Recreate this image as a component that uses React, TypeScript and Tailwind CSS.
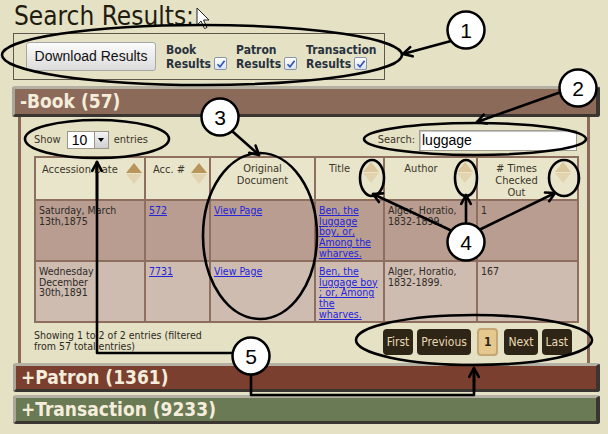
import React from 'react';

const cond = "font-['DejaVu_Sans_Condensed','DejaVu_Sans',sans-serif]";

function SortIcon({ active = false }: { active?: boolean }) {
  return (
    <span className="flex flex-col items-center gap-[1px] shrink-0">
      <span
        className={`w-0 h-0 border-x-[8px] border-x-transparent border-b-[10px] ${
          active ? 'border-b-[#b8955a]' : 'border-b-[#dcc69c]'
        }`}
      />
      <span className="w-0 h-0 border-x-[8px] border-x-transparent border-t-[10px] border-t-[#e3d4b0]" />
    </span>
  );
}

function Check() {
  return (
    <span className="inline-flex items-center justify-center w-[13px] h-[13px] border border-[#8796ac] bg-gradient-to-b from-white to-[#dde3ec] rounded-[2px]">
      <svg width="10" height="10" viewBox="0 0 10 10">
        <path d="M1.5 5.2 L4 7.8 L8.6 1.8" fill="none" stroke="#2a4fb8" strokeWidth="1.6" />
      </svg>
    </span>
  );
}

function Opt({ title }: { title: string }) {
  return (
    <div className={`flex flex-col text-[12px] leading-[14px] font-bold text-[#28323e] ${cond}`}>
      <span>{title}</span>
      <span className="flex items-center gap-[3px]">
        Results <Check />
      </span>
    </div>
  );
}

function Bar({ label, color }: { label: string; color: string }) {
  return (
    <div
      className={`flex items-center h-full pl-[5px] border-t-[3px] border-l-[3px] border-t-[#b4b0a3] border-l-[#aaa699] border-r-[4px] border-b-[3px] border-r-[#3a3530] border-b-[#3a3530] rounded-[3px] ${color} text-[#f5eddb] font-bold text-[19px] ${cond}`}
    >
      {label}
    </div>
  );
}

function PageBtn({ label, current = false }: { label: string; current?: boolean }) {
  return (
    <span
      className={`flex items-center justify-center rounded-[4px] text-[12px] ${cond} ${
        current
          ? 'h-[28px] px-[5px] bg-[#e4c88e] border-2 border-[#c4a774] text-[#2e2416] font-bold'
          : 'h-[26px] px-[4px] bg-[#2f2517] text-[#e8d8b2]'
      }`}
    >
      {label}
    </span>
  );
}

const link = 'text-[#2424d8] underline';

const rows = [
  {
    date: ['Saturday, March', '13th,1875'],
    acc: '572',
    title: ['Ben, the', 'luggage', 'boy, or,', 'Among the', 'wharves.'],
    author: ['Alger, Horatio,', '1832-1899.'],
    times: '1',
    bg: 'bg-[#b89d90]',
  },
  {
    date: ['Wednesday', 'December', '30th,1891'],
    acc: '7731',
    title: ['Ben, the', 'luggage boy', '; or, Among', 'the', 'wharves.'],
    author: ['Alger, Horatio,', '1832-1899.'],
    times: '167',
    bg: 'bg-[#cebcb1]',
  },
];

function Lines({ lines }: { lines: string[] }) {
  return (
    <>
      {lines.map((l, i) => (
        <span key={i} className="block">
          {l}
        </span>
      ))}
    </>
  );
}

function arrow(x1: number, y1: number, x2: number, y2: number, key: string) {
  const a = Math.atan2(y2 - y1, x2 - x1);
  const len = 10;
  const p1 = [x2 - len * Math.cos(a - 0.5), y2 - len * Math.sin(a - 0.5)];
  const p2 = [x2 - len * Math.cos(a + 0.5), y2 - len * Math.sin(a + 0.5)];
  return (
    <g key={key}>
      <line x1={x1} y1={y1} x2={x2} y2={y2} />
      <polyline points={`${p1[0]},${p1[1]} ${x2},${y2} ${p2[0]},${p2[1]}`} />
    </g>
  );
}

function Callout({ x, y, n }: { x: number; y: number; n: string }) {
  return (
    <g>
      <circle cx={x} cy={y} r={18.5} fill="white" stroke="black" strokeWidth={2.5} />
      <text
        x={x}
        y={y + 7.5}
        textAnchor="middle"
        fontSize="21"
        fontFamily="Liberation Sans, Arial, sans-serif"
        fill="black"
        stroke="none"
      >
        {n}
      </text>
    </g>
  );
}

function Annotations() {
  return (
    <svg className="absolute inset-0 pointer-events-none" width="608" height="434" viewBox="0 0 608 434">
      {/* mouse cursor */}
      <path
        d="M197 8 L197 25 L201 21 L204.5 28.5 L207 27.5 L203.5 20 L209 20 Z"
        fill="white"
        stroke="#222"
        strokeWidth="1"
      />
      <g fill="none" stroke="black" strokeWidth={2.6} strokeLinecap="round" strokeLinejoin="round">
        <ellipse cx={202} cy={55} rx={200} ry={30} />
        <ellipse cx={475} cy={139} rx={111} ry={16} />
        <ellipse cx={260} cy={236} rx={57} ry={83} />
        <ellipse cx={372} cy={178} rx={12} ry={18} />
        <ellipse cx={466} cy={178} rx={11} ry={18} />
        <ellipse cx={564} cy={178} rx={15} ry={18} />
        <ellipse cx={97} cy={139} rx={72} ry={19} />
        <ellipse cx={474} cy={340} rx={118} ry={25} />
        {arrow(451, 41, 403, 54, 'a1')}
        {arrow(561, 92, 477, 122, 'a2')}
        {arrow(232, 131, 259, 155, 'a3')}
        {arrow(450, 230, 373, 194, 'a4a')}
        {arrow(466, 222, 466, 195, 'a4b')}
        {arrow(481, 229, 555, 193, 'a4c')}
        <polyline points="233,353 97,353 97,162" />
        {arrow(97, 200, 97, 162, 'a5a')}
        <polyline points="251,375 251,395 474,395 474,369" />
        {arrow(474, 390, 474, 368, 'a5b')}
      </g>
      <Callout x={466} y={30} n="1" />
      <Callout x={578} y={88} n="2" />
      <Callout x={220} y={117} n="3" />
      <Callout x={466} y={242} n="4" />
      <Callout x={251} y={356} n="5" />
    </svg>
  );
}

export default function App() {
  return (
    <div className="relative w-[608px] h-[434px] overflow-hidden bg-[#e5e1c5] text-[#2e2a22]">
      <div className="flex flex-col">
        <div className={`h-[33px] pl-[14px] pt-[1px] text-[26px] leading-[30px] text-[#221c0e] ${cond}`}>
          Search Results:
        </div>

        <div className="ml-[13px] w-[372px] h-[47px] border border-[#5e584c] flex items-center pl-[12px]">
          <button className="h-[29px] w-[130px] mr-[10px] rounded-[3px] border border-[#a7a7a7] bg-gradient-to-b from-[#fbfbfb] to-[#dcdcdc] text-[14px] text-[#111] font-['Liberation_Sans',Arial,sans-serif]">
            Download Results
          </button>
          <div className="flex gap-[9px]">
            <Opt title="Book" />
            <Opt title="Patron" />
            <Opt title="Transaction" />
          </div>
        </div>

        <div className="mt-[6px] ml-[12px] w-[588px] h-[31px]">
          <Bar label="-Book (57)" color="bg-[#8c6a5a]" />
        </div>

        <div className={`ml-[18px] w-[572px] h-[246px] border-x-[3px] border-[#8c6a5a] pl-[13px] pt-[12px] ${cond}`}>
          <div className="flex items-center justify-between w-[542px] h-[22px]">
            <div className="flex items-center text-[11px] text-[#3a3428]">
              <span>Show</span>
              <span className="ml-[6px] flex items-center h-[18px] w-[42px] bg-white border border-[#9a968c]">
                <span className="flex-1 pl-[4px] text-[14px] text-black font-['Liberation_Sans',Arial,sans-serif]">10</span>
                <span className="flex items-center justify-center w-[14px] h-full bg-gradient-to-b from-[#f4f4f4] to-[#cfcfcf] border-l border-[#9a968c]">
                  <span className="w-0 h-0 border-x-[3.5px] border-x-transparent border-t-[4px] border-t-black" />
                </span>
              </span>
              <span className="ml-[5px]">entries</span>
            </div>
            <div className="flex items-center text-[11px] text-[#3a3428] -mr-[1px]">
              <span>Search:</span>
              <span className="ml-[4px] w-[158px] h-[21px] bg-white border border-[#a09c92] shadow-[inset_1px_1px_1px_rgba(0,0,0,0.25)] flex items-center pl-[2px] text-[14px] text-black font-['Liberation_Sans',Arial,sans-serif]">
                luggage
              </span>
            </div>
          </div>

          <table className="mt-[5px] w-[543px] border-collapse border-2 border-[#8e6e5e] table-fixed text-[10.5px] leading-[10.7px]">
            <colgroup>
              <col className="w-[110px]" />
              <col className="w-[65px]" />
              <col className="w-[105px]" />
              <col className="w-[69px]" />
              <col className="w-[93px]" />
              <col className="w-[101px]" />
            </colgroup>
            <thead>
              <tr className="h-[42px] bg-[#e9e5cb] text-[#3a3528] text-[11px] leading-[12px]">
                <th className="border-2 border-[#8e6e5e] align-top font-normal p-0">
                  <div className="flex justify-between pl-[6px] pr-[2px] pt-[4px]">
                    <span className="pt-[2px]">Accession Date</span>
                    <span className="pt-[1px]"><SortIcon active /></span>
                  </div>
                </th>
                <th className="border-2 border-[#8e6e5e] align-top font-normal p-0">
                  <div className="flex justify-between pl-[7px] pr-[2px] pt-[4px]">
                    <span className="pt-[2px]">Acc. #</span>
                    <span className="pt-[1px]"><SortIcon active /></span>
                  </div>
                </th>
                <th className="border-2 border-[#8e6e5e] align-top font-normal p-0">
                  <div className="pt-[5px] text-center">
                    Original
                    <br />
                    Document
                  </div>
                </th>
                <th className="border-2 border-[#8e6e5e] align-top font-normal p-0">
                  <div className="flex pt-[4px] pr-[4px]">
                    <span className="flex-1 text-center pt-[1px]">Title</span>
                    <SortIcon />
                  </div>
                </th>
                <th className="border-2 border-[#8e6e5e] align-top font-normal p-0">
                  <div className="flex pt-[4px] pr-[3px]">
                    <span className="flex-1 text-center pt-[1px]">Author</span>
                    <SortIcon />
                  </div>
                </th>
                <th className="border-2 border-[#8e6e5e] align-top font-normal p-0">
                  <div className="flex pt-[4px] pr-[6px]">
                    <span className="flex-1 text-center pt-[1px]">
                      # Times
                      <br />
                      Checked
                      <br />
                      Out
                    </span>
                    <SortIcon />
                  </div>
                </th>
              </tr>
            </thead>
            <tbody>
              {rows.map((r) => (
                <tr key={r.acc} className={`h-[61px] ${r.bg} text-[#2e2a26]`}>
                  <td className="border-2 border-[#8e6e5e] align-top pl-[3px] pt-[4px]">
                    <Lines lines={r.date} />
                  </td>
                  <td className="border-2 border-[#8e6e5e] align-top pl-[3px] pt-[4px]">
                    <span className={link}>{r.acc}</span>
                  </td>
                  <td className="border-2 border-[#8e6e5e] align-top pl-[3px] pt-[4px]">
                    <span className={link}>View Page</span>
                  </td>
                  <td className="border-2 border-[#8e6e5e] align-top pl-[3px] pt-[4px]">
                    <span className={`block ${link}`}>
                      <Lines lines={r.title} />
                    </span>
                  </td>
                  <td className="border-2 border-[#8e6e5e] align-top pl-[3px] pt-[4px]">
                    <Lines lines={r.author} />
                  </td>
                  <td className="border-2 border-[#8e6e5e] align-top pl-[3px] pt-[4px]">{r.times}</td>
                </tr>
              ))}
            </tbody>
          </table>

          <div className="flex justify-between w-[542px] mt-[5px]">
            <div className="pt-[2px] text-[10.5px] leading-[11px] text-[#2e2a22]">
              Showing 1 to 2 of 2 entries (filtered
              <br />
              from 57 total entries)
            </div>
            <div className="flex items-center gap-[4px] pr-[4px]">
              <PageBtn label="First" />
              <PageBtn label="Previous" />
              <span className="mx-[2px]">
                <PageBtn label="1" current />
              </span>
              <PageBtn label="Next" />
              <PageBtn label="Last" />
            </div>
          </div>
        </div>

        <div className="ml-[13px] w-[587px] h-[29px]">
          <Bar label="+Patron (1361)" color="bg-[#7b3f2f]" />
        </div>
        <div className="mt-[3px] ml-[13px] w-[587px] h-[29px]">
          <Bar label="+Transaction (9233)" color="bg-[#6a7a55]" />
        </div>
      </div>
      <Annotations />
    </div>
  );
}
